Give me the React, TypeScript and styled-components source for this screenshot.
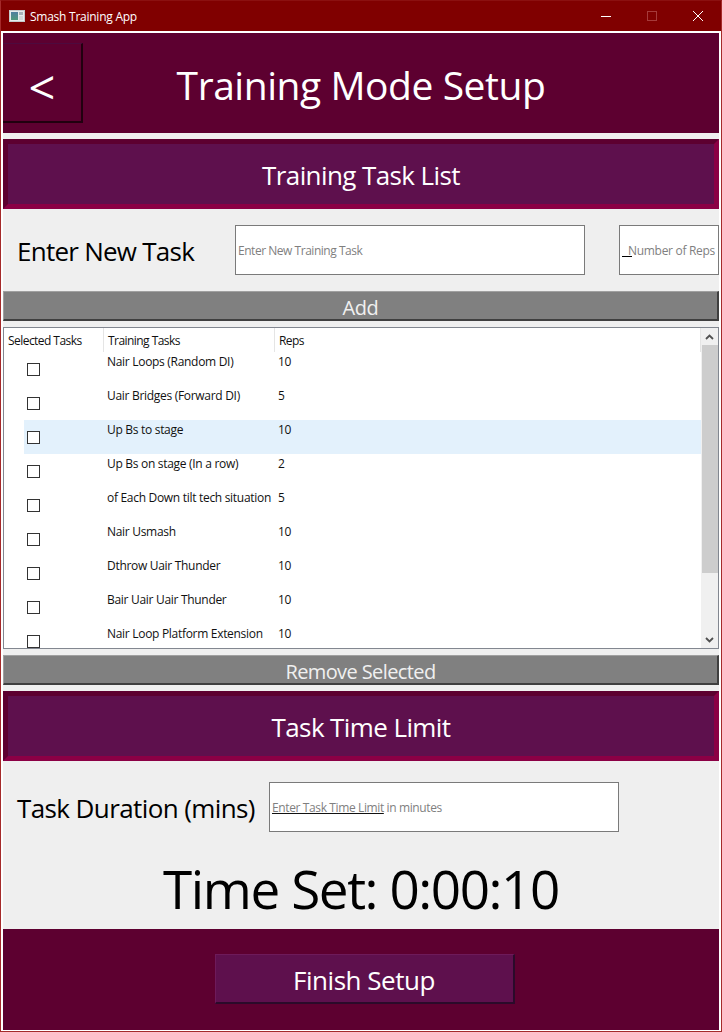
import React from 'react';
import styled, { createGlobalStyle } from 'styled-components';

const GlobalStyle = createGlobalStyle`
  html, body {
    margin: 0;
    padding: 0;
    background: #800000;
  }
  * {
    box-sizing: border-box;
  }
`;

const Window = styled.div`
  width: 722px;
  height: 1032px;
  display: flex;
  flex-direction: column;
  overflow: hidden;
  border: 1px solid #a52a2a;
  border-top-color: #8b1010;
  background: #800000;
  font-family: 'Open Sans', 'Noto Sans', sans-serif;
`;

const TitleBar = styled.div`
  height: 30px;
  flex: none;
  display: flex;
  align-items: center;
  padding-left: 8px;
  color: #fff;
  font-size: 12px;
  letter-spacing: -0.25px;
`;

const AppIcon = styled.svg`
  width: 16px;
  height: 16px;
  margin-right: 5px;
`;

const WindowControls = styled.div`
  margin-left: auto;
  display: flex;
  height: 100%;
`;

const WindowControl = styled.div`
  width: 46px;
  height: 100%;
  display: flex;
  align-items: center;
  justify-content: center;
`;

const Frame = styled.div`
  flex: 1;
  min-height: 0;
  display: flex;
  flex-direction: column;
  background: #efefef;
  border: 2px solid #fff;
  border-bottom-width: 1px;
`;

const Header = styled.div`
  height: 100px;
  flex: none;
  display: flex;
  align-items: center;
  position: relative;
  background: #5d0030;
`;

const BackButton = styled.div`
  width: 80px;
  height: 80px;
  flex: none;
  display: flex;
  align-items: center;
  justify-content: center;
  padding-top: 8px;
  background: #5d0030;
  color: #fff;
  font-size: 47px;
  border-style: solid;
  border-width: 1px 2px 2px 0;
  border-color: #4d0a3e #21000f #21000f #5d0030;
`;

const PageTitle = styled.h1`
  flex: 1;
  margin: 0 80px 0 0;
  padding-top: 3px;
  text-align: center;
  color: #fff;
  font-size: 39px;
  font-weight: 400;
  letter-spacing: -0.45px;
`;

const Band = styled.div<{ $gap: number }>`
  height: 70px;
  flex: none;
  margin-top: ${(p) => p.$gap}px;
  padding-top: 2px;
  display: flex;
  align-items: center;
  justify-content: center;
  color: #fff;
  font-size: 26px;
  letter-spacing: -0.6px;
  background: #5e104d;
  border-style: solid;
  border-width: 5px;
  border-color: #5d0030 #8b0045 #8b0045 #5d0030;
`;

const FormRow = styled.div<{ $top: number; $pad: number }>`
  flex: none;
  height: 50px;
  margin-top: ${(p) => p.$top}px;
  padding-left: ${(p) => p.$pad}px;
  display: flex;
  align-items: center;
`;

const FieldLabel = styled.div<{ $width: number; $spacing: number }>`
  width: ${(p) => p.$width}px;
  flex: none;
  padding-top: 1px;
  color: #000;
  font-size: 26px;
  letter-spacing: ${(p) => p.$spacing}px;
  white-space: nowrap;
`;

const TextField = styled.div<{ $width: number; $left?: number; $spacing: number }>`
  width: ${(p) => p.$width}px;
  height: 50px;
  flex: none;
  margin-left: ${(p) => p.$left ?? 0}px;
  display: flex;
  align-items: center;
  padding-left: 2px;
  background: #fff;
  border: 1px solid #7a7a7a;
  color: #7f7f7f;
  font-size: 12px;
  letter-spacing: ${(p) => p.$spacing}px;
  white-space: pre;
`;

const AccessKeyMark = styled.span`
  width: 10px;
  height: 1px;
  flex: none;
  margin-right: -4px;
  background: #000;
  transform: translateY(6px);
`;

const Underlined = styled.span`
  text-decoration: underline;
  text-decoration-color: #111;
`;

const GreyButton = styled.div<{ $top: number; $spacing: number }>`
  height: 30px;
  flex: none;
  margin-top: ${(p) => p.$top}px;
  display: flex;
  align-items: flex-end;
  justify-content: center;
  background: #808080;
  color: #f0f0f0;
  font-size: 20px;
  line-height: 23px;
  letter-spacing: ${(p) => p.$spacing}px;
  border-style: solid;
  border-width: 1px 2px 2px 1px;
  border-color: #a0a0a0 #3f3f3f #3f3f3f #a0a0a0;
`;

const ListBox = styled.div`
  height: 322px;
  flex: none;
  margin-top: 6px;
  display: flex;
  background: #fff;
  border: 1px solid #828790;
  overflow: hidden;
`;

const ListBody = styled.div`
  flex: 1;
  min-width: 0;
`;

const HeaderRow = styled.div`
  height: 24px;
  display: grid;
  grid-template-columns: 100px 171px 1fr;
  border-right: 1px solid #e5e5e5;
`;

const HeaderCell = styled.div`
  padding: 5px 0 0 4px;
  color: #111;
  font-size: 12px;
  line-height: 16px;
  letter-spacing: -0.55px;
  white-space: nowrap;
  border-right: 1px solid #e5e5e5;

  &:last-child {
    border-right: none;
  }
`;

const TaskRow = styled.div<{ $selected?: boolean }>`
  height: 34px;
  display: grid;
  grid-template-columns: 20px 80px 171px 1fr;
  font-size: 12px;
  line-height: 16px;
  letter-spacing: -0.3px;
  color: #111;

  & > * {
    background: ${(p) => (p.$selected ? '#e3f1fc' : 'transparent')};
  }
  & > *:first-child {
    background: transparent;
  }
`;

const CheckCell = styled.div`
  padding: 11px 0 0 3px;
`;

const CheckBox = styled.div`
  width: 13px;
  height: 13px;
  background: #fff;
  border: 1px solid #333;
`;

const TextCell = styled.div`
  padding: 2px 0 0 3px;
  white-space: nowrap;
`;

const Scrollbar = styled.div`
  width: 17px;
  flex: none;
  display: flex;
  flex-direction: column;
  background: #f0f0f0;
`;

const ScrollArrow = styled.div`
  height: 17px;
  flex: none;
  display: flex;
  align-items: center;
  justify-content: center;
`;

const ScrollTrack = styled.div`
  flex: 1;
  padding-left: 1px;
`;

const ScrollThumb = styled.div`
  height: 228px;
  background: #cdcdcd;
`;

const TimeSet = styled.div`
  flex: 1;
  display: flex;
  align-items: center;
  justify-content: center;
  color: #000;
  font-size: 53px;
  letter-spacing: -1.42px;
  padding-top: 16px;
`;

const Footer = styled.div`
  height: 101px;
  flex: none;
  display: flex;
  align-items: center;
  justify-content: center;
  padding: 0 0 1px 7px;
  background: #5d0030;
`;

const FinishButton = styled.div`
  width: 300px;
  height: 50px;
  display: flex;
  align-items: center;
  justify-content: center;
  padding-top: 3px;
  background: #5e104d;
  color: #fff;
  font-size: 26px;
  letter-spacing: -0.47px;
  border-style: solid;
  border-width: 1px 2px 2px 1px;
  border-color: #6e1a5a #2b0a2a #2b0a2a #6e1a5a;
`;

const tasks = [
  { name: 'Nair Loops (Random DI)', reps: 10 },
  { name: 'Uair Bridges (Forward DI)', reps: 5 },
  { name: 'Up Bs to stage', reps: 10, selected: true },
  { name: 'Up Bs on stage (In a row)', reps: 2 },
  { name: 'of Each Down tilt tech situation', reps: 5 },
  { name: 'Nair Usmash', reps: 10 },
  { name: 'Dthrow Uair Thunder', reps: 10 },
  { name: 'Bair Uair Uair Thunder', reps: 10 },
  { name: 'Nair Loop Platform Extension', reps: 10 },
];

const App: React.FC = () => {
  return (
    <Window>
      <GlobalStyle />
      <TitleBar>
        <AppIcon viewBox="0 0 16 16">
          <defs>
            <linearGradient id="appIconPanel" x1="0" y1="0" x2="0" y2="1">
              <stop offset="0" stopColor="#4f7fa0" />
              <stop offset="1" stopColor="#4f9a7c" />
            </linearGradient>
          </defs>
          <rect x="0.5" y="2.5" width="15" height="11" fill="#e6ecec" stroke="#c4caca" />
          <rect x="2" y="4" width="7" height="8" fill="url(#appIconPanel)" />
          <rect x="10" y="4" width="4" height="3" fill="#a8b4b8" />
          <rect x="10" y="8" width="4" height="4" fill="#d2d8d8" />
        </AppIcon>
        Smash Training App
        <WindowControls>
          <WindowControl>
            <svg width="10" height="10" viewBox="0 0 10 10">
              <path d="M0 5.5H10" stroke="#fff" strokeWidth="1" />
            </svg>
          </WindowControl>
          <WindowControl>
            <svg width="10" height="10" viewBox="0 0 10 10">
              <rect x="0.5" y="0.5" width="9" height="9" fill="none" stroke="#a63a3a" />
            </svg>
          </WindowControl>
          <WindowControl>
            <svg width="10" height="10" viewBox="0 0 10 10">
              <path d="M0 0L10 10M10 0L0 10" stroke="#fff" strokeWidth="1" />
            </svg>
          </WindowControl>
        </WindowControls>
      </TitleBar>
      <Frame>
        <Header>
          <BackButton>&lt;</BackButton>
          <PageTitle>Training Mode Setup</PageTitle>
        </Header>
        <Band $gap={6}>Training Task List</Band>
        <FormRow $top={16} $pad={14}>
          <FieldLabel $width={218} $spacing={-0.75}>Enter New Task</FieldLabel>
          <TextField $width={350} $spacing={-0.47}>Enter New Training Task</TextField>
          <TextField $width={100} $left={34} $spacing={-0.3}>
            <AccessKeyMark />
            Number of Reps
          </TextField>
        </FormRow>
        <GreyButton $top={16} $spacing={-0.45}>Add</GreyButton>
        <ListBox>
          <ListBody>
            <HeaderRow>
              <HeaderCell>Selected Tasks</HeaderCell>
              <HeaderCell>Training Tasks</HeaderCell>
              <HeaderCell>Reps</HeaderCell>
            </HeaderRow>
            {tasks.map((task) => (
              <TaskRow key={task.name} $selected={task.selected}>
                <div />
                <CheckCell>
                  <CheckBox />
                </CheckCell>
                <TextCell>{task.name}</TextCell>
                <TextCell>{task.reps}</TextCell>
              </TaskRow>
            ))}
          </ListBody>
          <Scrollbar>
            <ScrollArrow>
              <svg width="9" height="6" viewBox="0 0 9 6">
                <path d="M1 5L4.5 1.5L8 5" fill="none" stroke="#505050" strokeWidth="1.8" />
              </svg>
            </ScrollArrow>
            <ScrollTrack>
              <ScrollThumb />
            </ScrollTrack>
            <ScrollArrow>
              <svg width="9" height="6" viewBox="0 0 9 6">
                <path d="M1 1L4.5 4.5L8 1" fill="none" stroke="#505050" strokeWidth="1.8" />
              </svg>
            </ScrollArrow>
          </Scrollbar>
        </ListBox>
        <GreyButton $top={6} $spacing={-0.6}>Remove Selected</GreyButton>
        <Band $gap={6}>Task Time Limit</Band>
        <FormRow $top={21} $pad={14}>
          <FieldLabel $width={252} $spacing={-0.6}>Task Duration (mins)</FieldLabel>
          <TextField $width={350} $spacing={-0.38}>
            <Underlined>Enter Task Time Limit</Underlined> in minutes
          </TextField>
        </FormRow>
        <TimeSet>Time Set: 0:00:10</TimeSet>
        <Footer>
          <FinishButton>Finish Setup</FinishButton>
        </Footer>
      </Frame>
    </Window>
  );
};

export default App;
